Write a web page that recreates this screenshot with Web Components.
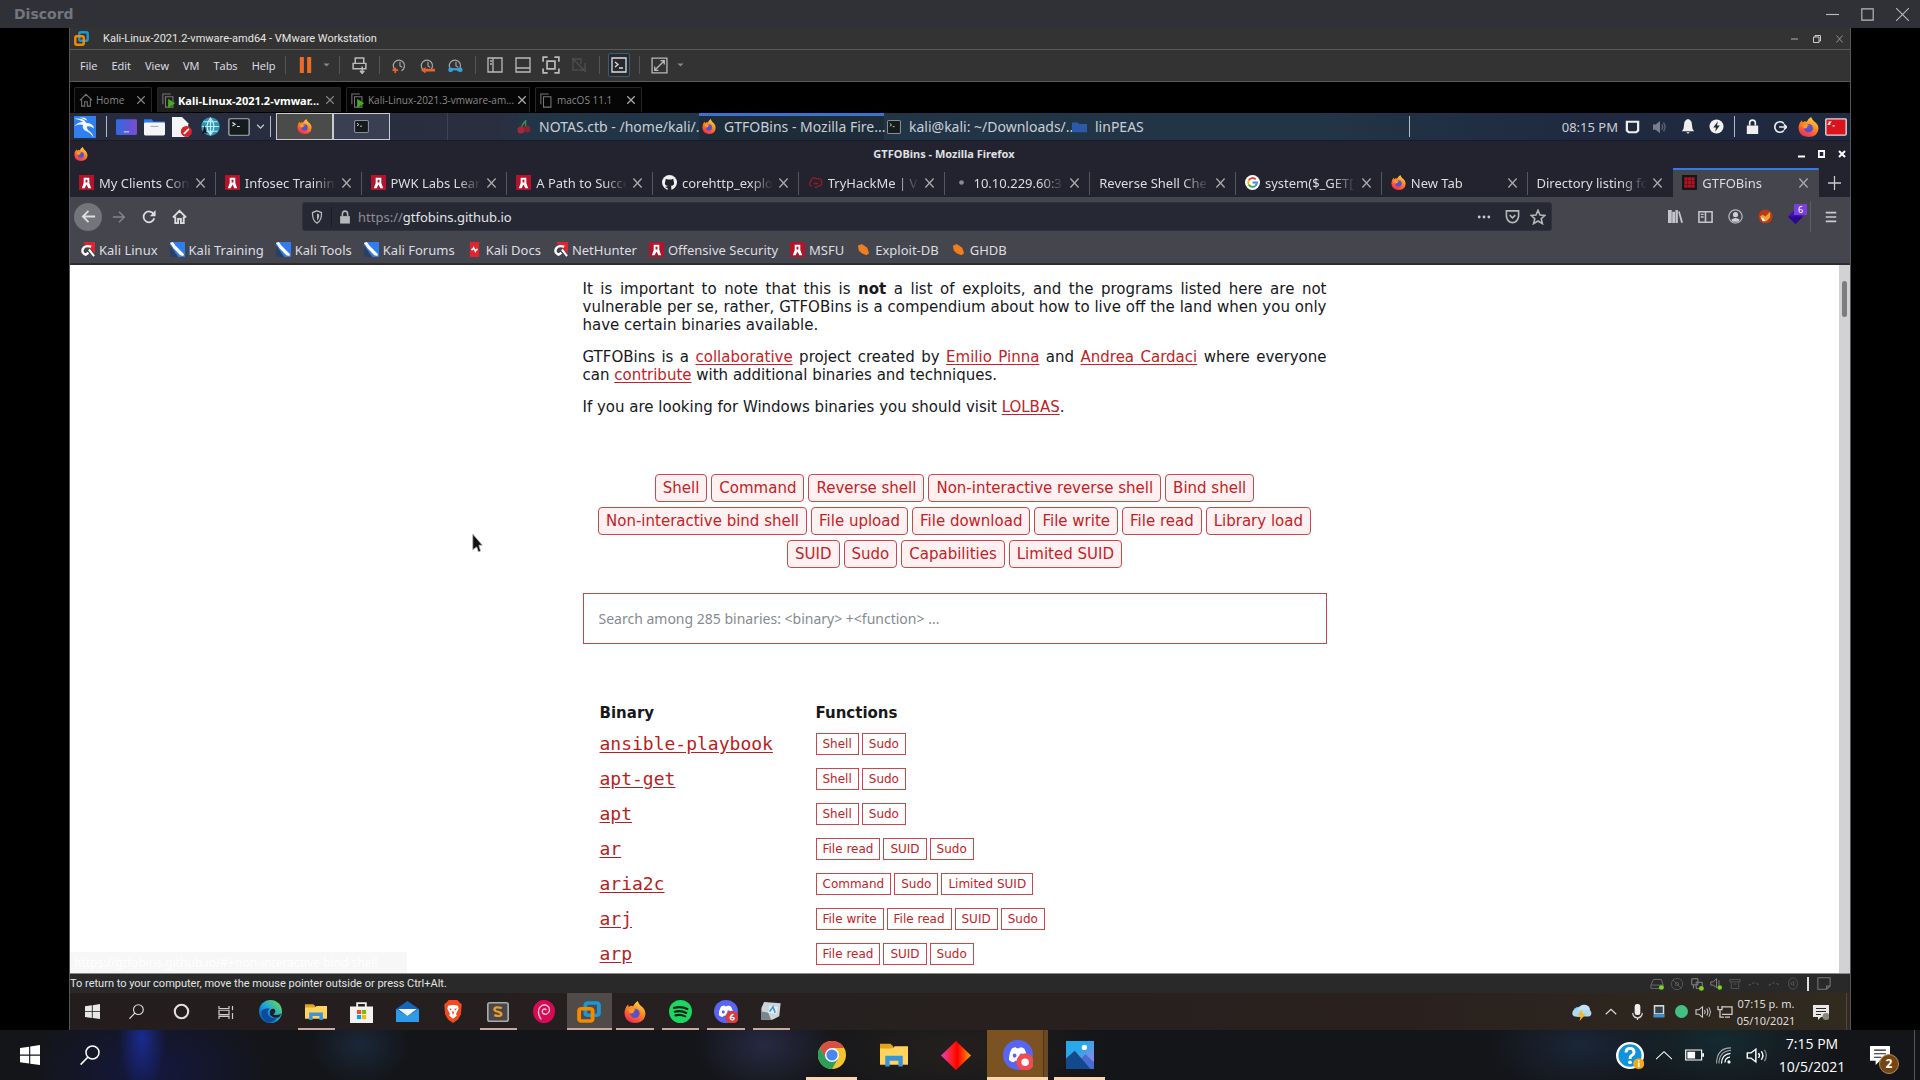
<!DOCTYPE html>
<html lang="en">
<head>
<meta charset="utf-8">
<title>Discord</title>
<style>
html, body { margin: 0; height: 100%; background: #000; overflow: hidden; }
body { font-family: "Noto Sans", "Open Sans", sans-serif; font-size: 13px; color: #ddd; }
</style>
</head>
<body>
<desk-top></desk-top>
<script>
const BASE = `
*, *::before, *::after { box-sizing: border-box; }
:host { box-sizing: border-box; }
button { font: inherit; color: inherit; background: none; border: 0; padding: 0; margin: 0; display: flex; align-items: center; justify-content: center; }
`;
function define(name, css, html, setup) {
  const t = document.createElement('template');
  t.innerHTML = `<style>${BASE}${css}</style>${html}`;
  customElements.define(name, class extends HTMLElement {
    constructor() {
      super();
      this.attachShadow({ mode: 'open' }).append(t.content.cloneNode(true));
    }
    connectedCallback() { if (setup) setup(this, this.shadowRoot); }
  });
}

/* ---------- icons ---------- */
const line = (d, c = '#bbb', w = 1.4, extra = '') => `<path d="${d}" fill="none" stroke="${c}" stroke-width="${w}" ${extra}/>`;
const CLOCK = c => line('M4 13.2A6 6 0 1 1 10 13.6', c, 1.3) + line('M8.5 4V8.5L11 10', c, 1.2);
const WIN = c => `<path fill="${c}" d="M0 2.3 7.3 1.3V7.6H0ZM8.2 1.2 16 0V7.6H8.2ZM0 8.5H7.3V14.8L0 13.8ZM8.2 8.5H16V16L8.2 14.9Z"/>`;
const SEARCH = c => `<circle cx="10" cy="6" r="5.2" fill="none" stroke="${c}" stroke-width="1.2"/>` + line('M6.2 9.8.5 15.7', c, 1.3);
const SPEAKER = (c, c2 = c) => line('M1 5.5H3.8L7.5 2V14L3.8 10.5H1Z', c, 1.1) + line('M9.5 5.8Q11 8 9.5 10.2', c, 1.1) + line('M11.7 4Q14 8 11.7 12', c, 1.1) + line('M14 2.5Q17 8 14 13.5', c2, 1);
const FOX = `<defs><linearGradient id="a" x1=".8" y1="0" x2=".3" y2="1"><stop offset="0" stop-color="#ffe14a"/><stop offset=".45" stop-color="#ff8a1f"/><stop offset="1" stop-color="#f02a55"/></linearGradient></defs>
<path fill="url(#a)" d="M10 0Q10.5 2 12.2 3.4 15.8 6 15.6 9.5 15 15.8 8 16 .8 15.6.4 9 .4 5 3 2.6L3.4 4.4 5 3.4 6.6 3.8Q7.4 1.6 10 0Z"/><circle cx="8" cy="9" r="3.4" fill="#5b50c8"/><path fill="#ff9a26" d="M3 6.3Q5.5 4.6 8.6 6.6 6.8 7 7 8.3 5.6 9.6 4.6 8.8 3.4 8 3 6.3Z"/>`;
const OFFSEC = `<rect width="16" height="16" fill="#b3142c"/><path d="M5 3H11V8.5L13 14H10L8 10 6 14H3L5 8.5ZM7 5V8H9V5Z" fill="#fff" fill-rule="evenodd"/>`;
const SPEAR = `<path d="M0 0H16V16H9L0 3Z" fill="#2f7df0"/><path d="M0 5V16H8Z" fill="#24416b"/><path d="M0 1 3 0 6 4 15 13 14 15 11 14 4 7Z" fill="#fff"/>`;
const NH = `<path d="M3 0H16V12Z" fill="#e3242f"/><path d="M12 5Q5 3 3 7.500 1.500 12 6 13.500L9 11.500" fill="none" stroke="#fff" stroke-width="2.600"/><path d="M9.500 8 15 15" stroke="#fff" stroke-width="2.200"/>`;
const VMW = `<rect x="5.6" y="1.4" width="9" height="9" rx="1.5" fill="none" stroke="#1998d5" stroke-width="2.6"/><rect x="1.4" y="5.6" width="9" height="9" rx="1.5" fill="none" stroke="#f38b00" stroke-width="2.6"/>`;
const FOLDER = `<path fill="#e2a21c" d="M0 1H6L7.5 2.6V6H0Z"/><path fill="#ffd35c" d="M0 4H7L8.5 2.6H16V14H0Z"/><path fill="#3a95d8" d="M3 8.5H13V15H10.5V11.5H5.5V15H3Z"/>`;
const DISCORD = `<circle cx="8" cy="8" r="8" fill="#5865f2"/><path fill="#fff" d="M4.7 4.5Q6 3.8 6.9 3.8L7.2 4.4H8.8L9.1 3.8Q10 3.8 11.3 4.5 13 7.3 12.8 10.6 11.5 11.7 10.2 11.9L9.6 11H6.4L5.8 11.9Q4.5 11.7 3.2 10.6 3 7.3 4.7 4.5Z"/><ellipse cx="6.2" cy="8.3" rx="1" ry="1.1" fill="#5865f2"/><ellipse cx="9.8" cy="8.3" rx="1" ry="1.1" fill="#5865f2"/>`;
const TERM = c => `<rect x=".6" y=".6" width="14.8" height="14.8" rx="1.5" fill="#151a1d" stroke="${c}" stroke-width="1.2"/>` + line('M3.2 4 5.2 5.6 3.2 7.2M6.5 7.6H8.6', '#ddd', 1);
const VMPAGE = c => line('M1 12V1H10M4 4H12.5V15H4Z', c, 1.2);
const ICONS = {
  min: line('M0 8H16', '#b9bbbe', 1.4), max: line('M1 1H15V15H1Z', '#b9bbbe', 1.4), close: line('M0 0 16 16M16 0 0 16', '#b9bbbe', 1.3),
  vmin: line('M0 8H16', '#888', 3), vmax: line('M1 4H12V15H1ZM4 4V1H15V12H12', '#ccc', 2), vclose: line('M1 1 15 15M15 1 1 15', '#999', 2),
  kmin: line('M0 13H16', '#fff', 4), kmax: line('M2 2H14V14H2Z', '#fff', 4), kclose: line('M2 2 14 14M14 2 2 14', '#fff', 4),
  vmware: VMW,
  pause: `<path fill="#f26a21" d="M1 0H6V16H1ZM10 0H15V16H10Z"/>`,
  caret: `<path fill="#888" d="M1 4H15L8 12Z"/>`,
  device: line('M4 6V1H12V6M2 6H14V11H2ZM10.5 9V15M8.5 13 10.5 15.4 12.5 13', '#bbb', 1.4),
  snap1: CLOCK('#aaa') + line('M3.5 10V16M.5 13H6.5', '#e8642a', 1.8),
  snap2: CLOCK('#aaa') + `<path fill="#e8642a" d="M1 13 6 9.5V11.5H16V14.5H6V16.5Z"/>`,
  snap3: CLOCK('#aaa') + line('M2 12H14', '#35a0dc', 2.4) + `<circle cx="2.8" cy="12.6" r="2.6" fill="#35a0dc"/><circle cx="13" cy="12.6" r="2.6" fill="#35a0dc"/>`,
  lay1: line('M1 1H15V15H1ZM6 1V15M3 4H5M3 7H5', '#bbb', 1.3), lay2: line('M1 1H15V15H1ZM1 11H15', '#bbb', 1.3),
  full: line('M1 5V1H5M11 1H15V5M15 11V15H11M5 15H1V11M4.5 4.5H11.5V11.5H4.5Z', '#bbb', 1.5),
  unity: line('M2 2H10V7M2 2V13H7M1 1 15 15M8 13H14V6', '#4d4f55', 1.3),
  vterm: line('M1 1H15V15H1Z', '#ddd', 1.3) + line('M4 5 7 7.5 4 10M8 11H12', '#ddd', 1.3),
  expand: line('M1 1H15V15H1ZM9 3.5H12.5V7M12.5 3.5 3.5 12.5M3.5 9V12.5H7', '#bbb', 1.2),
  home0: line('M1 8.5 8 1.5 15 8.5M3 7V15H6.5V10H9.5V15H13V7', '#777', 1.2),
  vmon: VMPAGE('#777') + `<path fill="#3fae1f" d="M7 6 15 11 7 16Z"/>`, vmoff: VMPAGE('#777'),
  x: line('M2 2 14 14M14 2 2 14', '#aaa', 2), xd: line('M2 2 14 14M14 2 2 14', '#888', 1.8),
  kali: `<rect width="16" height="16" fill="#2f7ff0"/><path d="M0 2Q7 1 9 5 14 5 14.5 9 12 7 9.5 7.6 9 9.6 12 11.6 14 13 14.4 16 12 12 8 10.6 5.6 9 6.6 6.6 3 5.6 0 7.6 3 4.4 6.6 4.4 4 2.4 0 2ZM4 1 8 1.2 10 3.4Z" fill="#f4f8ff"/>`,
  desk: `<defs><linearGradient id="a"><stop offset="0" stop-color="#2f6be0"/><stop offset="1" stop-color="#7c4ad0"/></linearGradient></defs><rect y="1" width="16" height="14" rx="1" fill="url(#a)"/><path d="M6 12.3H10" stroke="#c9d6ff"/>`,
  files: `<path fill="#2b7ae6" d="M0 1H6L7 3H16V6H0Z"/><rect y="4" width="16" height="11.5" rx="1" fill="#f2f4f7"/><path d="M5 7.5H11" stroke="#aab"/>`,
  doc: `<path fill="#f4f4f4" d="M0 0H8L13 5V16H0Z"/><circle cx="11.5" cy="11.5" r="4.4" fill="#d8232a"/><path d="M9.5 13.5 13.5 9.5" stroke="#fff" stroke-width="1.4"/>`,
  globe: `<circle cx="8" cy="8" r="7.8" fill="#2c95b8"/>` + line('M1 8H15M8 .5V15.5M8 1Q2 8 8 15M8 1Q14 8 8 15M2 4H14M2 12H14', '#c4ecf4', 1) + `<path d="M3 7 5 14 3 13 1 15Z" fill="#111"/>`,
  term: TERM('#8a8f94'), chev: line('M2 5 8 11 14 5', '#ccc', 2.2), fox: FOX,
  cherry: line('M5 10Q6 4 10 1Q9 6 11 9', '#3c8f4a', 1.6) + `<circle cx="4.5" cy="11.5" r="4" fill="#a32a3a"/><circle cx="11.5" cy="10.5" r="3.8" fill="#8e2234"/>`,
  bfolder: `<path fill="#2a5aa8" d="M0 2H6L7.5 4H16V15H0Z"/>`,
  screen: line('M2 2H14V12L12 14H4L2 12Z', '#eee', 2.4),
  kvol: `<path fill="#777e8c" d="M0 5H3L8 1V15L3 11H0Z"/>` + line('M10 5Q12 8 10 11M12 3Q15.5 8 12 13', '#5a6170', 1.6),
  bell: `<path fill="#eee" d="M8 0Q12.5 1 12.5 6 12.5 10.5 15 13H1Q3.5 10.5 3.5 6 3.5 1 8 0ZM6 14H10Q8 17 6 14Z"/>`,
  power: `<circle cx="8" cy="8" r="7.5" fill="#f2f2f2"/><path d="M9.5 2.5 4.5 9H7.5L6.5 13.5 11.5 7H8.5Z" fill="#1f2a40"/>`,
  lockw: `<path fill="#f0f0f0" d="M1 7H15V16H1Z"/>` + line('M4.5 7V4Q4.5 1.2 8 1.2T11.5 4V7', '#f0f0f0', 2),
  logout: line('M12.5 4A6 6 0 1 0 12.5 12M7 8H15M12.5 5 15.5 8 12.5 11', '#eee', 1.9),
  redterm: `<rect x=".6" y=".8" width="14.8" height="14.4" rx=".8" fill="#d9141b" stroke="#ddd" stroke-width="1"/>` + line('M2.5 3.5H4L2.5 5.5H4M5.5 7H7', '#fff', 1),
  offsec: OFFSEC, spear: SPEAR, nh: NH,
  docs: `<path fill="#e3242f" d="M3 0H13V16H3Z"/><path d="M4.500 8H6L7 6 9 10 10 8H11.500" stroke="#fff" stroke-width="1.500" fill="none"/>`,
  bug: `<path fill="#f07d1e" d="M2 4 6 2 9 4 12 6 14 12 11 14 6 12 3 9Z"/>`,
  github: `<circle cx="8" cy="8" r="8" fill="#f2f2f2"/><path fill="#20222a" d="M4 4 6 4.8H10L12 4 12.3 6Q14.3 11 9.8 11.5L10 16H6V13.7Q3.8 14 3.3 12.2 5 13 6.2 11.5 1.7 11 3.7 6Z"/>`,
  thm: line('M4 12Q0 10 3 6.5 5 1 9 4 15 3 14.5 8 15 12 10 12M6 9H11M7 13H10', '#8e1d26', 1.5),
  dot: `<circle cx="8" cy="8" r="2.5" fill="#8a8c94"/>`,
  google: `<circle cx="8" cy="8" r="8" fill="#fff"/>` + line('M11.5 4.7A4.7 4.7 0 0 0 4 5.7', '#ea4335', 2) + line('M4 5.6A4.7 4.7 0 0 0 4 10.4', '#fbbc05', 2) + line('M4 10.3A4.7 4.7 0 0 0 11 11.7', '#34a853', 2) + line('M11 11.7Q12.7 10.4 12.7 8H8', '#4285f4', 2),
  gtfo: `<rect width="16" height="16" fill="#14161a"/><rect x="2.5" y="2.5" width="11" height="11" fill="#b01624"/>` + line('M6 2V14M10 2V14M2 6H14M2 10H14', '#5a1018', .8),
  plus: line('M8 0V16M0 8H16', '#ccc', 1.5),
  back: line('M15 8H2M8 2 2 8 8 14', '#ddd', 2), fwd: line('M1 8H14M8 2 14 8 8 14', '#85868c', 1.7),
  reload: line('M13.5 5A6.2 6.2 0 1 0 14 9.5', '#ddd', 2) + `<path fill="#ddd" d="M15.5 0V7H9Z"/>`,
  homef: line('M1 9 8 2 15 9M3.5 8V15H6.5V10.5H9.5V15H12.5V8', '#ddd', 2),
  shield: line('M8 1 14 3Q14.5 12 8 15 1.5 12 2 3Z', '#b6b7bb', 1.7) + `<path fill="#b6b7bb" d="M8 4 11 5Q11 10 8 12Z"/>`,
  lock: `<path fill="#b6b7bb" d="M1.5 7H14.5V15.5H1.5Z"/>` + line('M4.5 7V4.5Q4.5 1.2 8 1.2T11.5 4.5V7', '#b6b7bb', 2),
  dots: `<circle cx="2.5" cy="8" r="1.6" fill="#ccc"/><circle cx="8" cy="8" r="1.6" fill="#ccc"/><circle cx="13.5" cy="8" r="1.6" fill="#ccc"/>`,
  pocket: line('M1.5 2H14.5V8Q13 14.5 8 14.5T1.5 8ZM5 6.5 8 9.5 11 6.5', '#b6b7bb', 1.7),
  star: line('M8 1.3 10 6 15 6.4 11.2 9.7 12.4 14.6 8 12 3.6 14.6 4.8 9.7 1 6.4 6 6Z', '#b6b7bb', 1.6),
  library: `<path fill="#c4c5ca" d="M0 1H4V15H0ZM4.500 3H7.500V15H4.500ZM8 1H10.500V15H8ZM10.800 3 12.500 2.500 16 14.500 14 15Z"/>`,
  sidebar: line('M1 2H15V14H1ZM8 2V14M3 5H6M3 8H6', '#c4c5ca', 1.7),
  account: line('M8 1A7 7 0 1 0 8.01 1', '#b6b7bb', 1.3) + `<circle cx="8" cy="6" r="2.7" fill="#d0d0d4"/><path fill="#d0d0d4" d="M3.5 11.5Q8 7.5 12.5 11.5L11 13.5H5Z"/>`,
  foxy: `<circle cx="8" cy="8" r="7.5" fill="#b83a16"/><path fill="#f0a03a" d="M2 8 5 6 8 8 13 3 13 9 9 13 5 12Z"/><path d="M3 9 6 10 8 13 5 13Z" fill="#fff"/>`,
  gem: `<path fill="#3d10b8" d="M8 0 16 8 8 16 0 8Z"/><path fill="#2a078c" d="M0 8H16L8 16Z"/>`,
  burger: line('M1 3H15M1 8H15M1 13H15', '#ccc', 1.9),
  s1: line('M1 10 4 3H13L15 10V14H1ZM1 10H15', '#777', 1) + `<circle cx="13" cy="13" r="2.8" fill="#7ed321"/>`,
  s2: `<circle cx="8" cy="8" r="6.5" fill="none" stroke="#5a5a5a" stroke-width="1"/><circle cx="8" cy="8" r="2" fill="none" stroke="#5a5a5a"/>` + line('M3 3 13 13', '#5a5a5a', 1),
  s3: line('M2 2H9V9H2ZM7 6H14V13H7ZM4 9V13', '#888', 1.1) + `<circle cx="13" cy="13" r="2.8" fill="#7ed321"/>`,
  s4: line('M1 6H4L8 2V13L4 10H1ZM11 4V10', '#888', 1.1) + `<circle cx="12" cy="13" r="2.8" fill="#7ed321"/>`,
  s5: line('M1 2H15V5H1ZM3 5V14H13V5M6 8H10', '#5a5a5a', 1.1), s6: line('M2 10Q8 3 14 10', '#5a5a5a', 1.3, 'stroke-dasharray="3 2"'),
  s7: `<ellipse cx="8" cy="8" rx="6" ry="7" fill="none" stroke="#5a5a5a"/>` + line('M5 7H7L9 5V11L7 9H5Z', '#5a5a5a', 1), s8: line('M1 1H15V11L11 15H1ZM15 11H11V15', '#777', 1.2),
  win: WIN('#e8e8e8'), winw: WIN('#fff'), search: SEARCH('#ddd'), searchw: SEARCH('#fff'),
  cortana: `<circle cx="8" cy="8" r="6.3" fill="none" stroke="#e0e0e0" stroke-width="2"/>`,
  taskview: line('M1 1V4H11V1M1 6H11V11H1ZM1 16V13H11V16M14.5 1V6M14.5 9V16', '#ccc', 1.2),
  edge: `<defs><linearGradient id="a" x1="0" y1="1" x2="1" y2="0"><stop offset=".1" stop-color="#0c55b5"/><stop offset=".5" stop-color="#1ba4e0"/><stop offset=".9" stop-color="#62d857"/></linearGradient></defs><circle cx="8" cy="8" r="8" fill="url(#a)"/><path d="M6 8Q6 13 12.5 12.7 10 16 6 15.5 1 13 1.8 7.5 4.5 5 7.5 6Z" fill="#0c4a9c"/><path d="M7.5 8Q8 5.5 10.5 6.3 12.5 8 10 10 12 11 15.5 9.5 14 13 11.5 12.3 7 12 7.5 8Z" fill="#231f1e"/>`,
  folder: FOLDER,
  store: line('M5 5V1.5H11V5', '#eee', 1.3) + `<path fill="#f2f2f2" d="M0 4H16V16H0Z"/><path fill="#f25022" d="M4.8 6.5H7.7V9.5H4.8Z"/><path fill="#7fba00" d="M8.3 6.5H11.2V9.5H8.3Z"/><path fill="#00a4ef" d="M4.8 10.2H7.7V13.2H4.8Z"/><path fill="#ffb900" d="M8.3 10.2H11.2V13.2H8.3Z"/>`,
  mail: `<path fill="#1565b8" d="M8 0 16 6V16H0V6Z"/><path fill="#2f9be8" d="M0 6 8 11.5 16 6V16H0Z"/><path fill="#f2f9ff" d="M1.5 6H14.5L8 11.5Z"/>`,
  brave: `<path fill="#f2491f" d="M4.5 0H11.5L13 1.5 15 3 14.3 10 12 13.5 8 16 4 13.5 1.7 10 1 3 3 1.5Z"/><path fill="#fff" d="M4 4 8 3.3 12 4 12.5 6 10.5 9.5 11 11 8 13 5 11 5.5 9.5 3.5 6Z"/><path fill="#f2491f" d="M5 5.5 7 6.5 6 7.3ZM11 5.5 9 6.5 10 7.3ZM7 8 8 10.5 9 8Z"/>`,
  sublime: `<rect x=".6" y=".6" width="14.8" height="14.8" rx="1.5" fill="#484848" stroke="#aaa" stroke-width="1.2"/>` + line('M10.8 4.8Q5.5 3.3 5.5 6 5.5 7.3 8 7.8 10.7 8.5 10.3 10.2 9.5 12 5.3 10.5', '#f09a2a', 1.8),
  debian: `<circle cx="8" cy="8" r="8" fill="#d70a53"/>` + line('M6 13.5Q2.5 9 5 5 8.5 1.5 11.5 5 13 8.5 9.5 10 6 10 7 7 8.5 5.5 9.8 7', '#f4c6d6', 1),
  spotify: `<circle cx="8" cy="8" r="8" fill="#1ed760"/>` + line('M3.5 5.5Q8.5 4 12.8 6.3M4 8.2Q8.3 7 12 9M4.5 10.7Q8 9.8 11.3 11.4', '#12221a', 1.5, 'stroke-linecap="round"'),
  discord: DISCORD,
  discord6: DISCORD + `<circle cx="12" cy="12" r="4.5" fill="#d83c3e"/>` + line('M13 9.8Q10.8 10.8 10.8 12.7 11 14 12.2 14 13.5 13.8 13.4 12.7 12.5 11.5 11 12.5', '#fff', .9),
  notes: `<path fill="#cfd4d8" d="M3 0 15 1 14 12 9 15 1 15 1 5Z"/><path fill="#78858e" d="M1 8 6 9 8 15H1Z"/><path d="M7 3 13 4 12 10 6 9Z" fill="#e4edf3"/>` + line('M7 8 9.500 4 11 9', '#3f9bd0', 1.200),
  discordrec: DISCORD + `<circle cx="11.8" cy="11.8" r="4.7" fill="#ed4c50"/><circle cx="11.8" cy="11.8" r="2" fill="#fff"/>`,
  weather: `<circle cx="6" cy="8" r="4.5" fill="#9fd2f3"/><circle cx="10" cy="6" r="4.5" fill="#c3e4f8"/><rect x="1" y="6" width="14.5" height="6" rx="3" fill="#aedaf5"/><path fill="#f6b81c" d="M8 6 5 11H7.5L6.5 16 11.5 9.5H9Z"/>`,
  up: line('M1 11 8 4.5 15 11', '#ddd', 1.5), upw: line('M0 12 8 4 16 12', '#fff', 1.1),
  mic: `<rect x="4.5" y="0" width="7" height="11" rx="2.5" fill="#eee"/>` + line('M2 9Q3 14 8 14T14 9M8 14V16', '#ddd', 1.5),
  sq: `<rect x="1" y="0" width="14" height="15" fill="#d6dade"/><rect x="3" y="2" width="10" height="8" fill="#34424e"/><rect x="1" y="11" width="14" height="4" fill="#3a8fd0"/>`,
  green: `<circle cx="8" cy="8" r="8" fill="#43bf86"/>`,
  vol: SPEAKER('#ccc'), volw: SPEAKER('#fff', '#888'),
  net: line('M5 3H15V11H5M8 14H13M1 2V6H5V2M3 6V14H7', '#ccc', 1.3),
  note: `<path fill="#e8e8e8" d="M0 1H16V13H8L5 16V13H0Z"/>` + line('M3 4.5H13M3 7.5H13M3 10.5H8', '#2c261f', 1.1) + `<circle cx="13" cy="12.5" r="3.5" fill="#8b8680"/>`,
  notew: `<path fill="#fff" d="M0 0H16V12.5H8L4.5 16V12.5H0Z"/>` + line('M3.3 3.5H12.7M3.3 6.5H12.7M3.3 9.5H9', '#1b1c20', .9),
  help: `<circle cx="8" cy="8" r="7.3" fill="#0f93dc" stroke="#fff" stroke-width="1.4"/>` + line('M5.7 6.2Q5.8 3.8 8 3.8T10.3 6Q10.3 7.2 8.9 8 8 8.5 8 10', '#fff', 1.7) + `<circle cx="8" cy="12" r="1.1" fill="#fff"/><circle cx="13" cy="12.8" r="3.2" fill="#f6a81c"/>` + line('M13 12.2V14.8M13 10.7V11.5', '#fff', .9),
  batt: line('M.6 3.6H14V12.4H.6Z', '#fff', 1) + `<path fill="#fff" d="M2 5H8.5V11H2ZM14.5 6.5H16V9.5H14.5Z"/>`,
  wifi: `<circle cx="13" cy="14" r="1.6" fill="#fff"/>` + line('M9 14.5Q9 10 14 9.5M5.5 15.5Q5.5 7 14.5 6', '#fff', 1.2) + line('M3 15.5Q3 4 15 3M.6 15.5Q.6 1 15 .8', '#aaa', 1),
  chrome: `<circle cx="8" cy="8" r="8" fill="#f7c42f"/><path fill="#d94f43" d="M1.07 4A8 8 0 0 1 14.93 4H8L4.5 10Z"/><path fill="#2aa05a" d="M1.07 4A8 8 0 0 0 8 16L11.5 10H4.6Z"/><circle cx="8" cy="8" r="4" fill="#fff"/><circle cx="8" cy="8" r="3.2" fill="#4a86ee"/>`,
  diamond: `<defs><linearGradient id="a"><stop offset="0" stop-color="#e83fb8"/><stop offset=".4" stop-color="#ff1a1a"/><stop offset=".55" stop-color="#f00"/><stop offset="1" stop-color="#ff9d0a"/></linearGradient></defs><path fill="url(#a)" d="M8 0 16 8 8 16 0 8Z"/>`,
  photos: `<defs><linearGradient id="a" x1="0" y1="0" x2="1" y2="1"><stop offset=".4" stop-color="#28a8ea"/><stop offset="1" stop-color="#b97be0"/></linearGradient></defs><rect width="16" height="16" fill="url(#a)"/><path fill="#4a6bd0" d="M6 13 11 7.5 16 12V16H6Z"/><path fill="#124a8c" d="M0 10 5 5.5 14 16H0Z"/><circle cx="10.5" cy="3.7" r="1.5" fill="#fff"/>`,
  cursor: `<path fill="#111" stroke="#bbb" stroke-width=".8" d="M2 0 13 10H9L11 15 8.5 16 6.5 11.5 2 14Z"/>`
};
customElements.define('ui-icon', class extends HTMLElement {
  constructor() { super(); this.attachShadow({ mode: 'open' }); }
  connectedCallback() {
    const w = this.getAttribute('w') || 16, h = this.getAttribute('h') || w;
    this.shadowRoot.innerHTML = `<style>:host{display:block;flex:none}svg{display:block}</style>
      <svg width="${w}" height="${h}" viewBox="0 0 16 16" preserveAspectRatio="none" aria-hidden="true">${ICONS[this.getAttribute('name')] || ''}</svg>`;
  }
});
const ic = (n, w, h) => `<ui-icon name="${n}" w="${w}" h="${h || w}"></ui-icon>`;
const ib = (n, w, h, label, cls = 'c') => `<button class="${cls}" aria-label="${label}">${ic(n, w, h)}</button>`;

/* ---------- outer frame ---------- */
define('desk-top', `
:host { display: flex; flex-direction: column; height: 100vh; }
main { flex: 1; min-height: 0; padding: 0 69px; display: flex; background: #000; }
vm-window { flex: 1; min-width: 0; }
`, `<app-bar></app-bar><main><vm-window></vm-window></main><host-taskbar></host-taskbar>`);

define('app-bar', `
:host { display: flex; align-items: center; justify-content: space-between; height: 28px; background: #303136; padding: 0 11px 0 14px; flex: none; }
h1 { margin: 0; font: bold 14px "DejaVu Sans", sans-serif; color: #72767d; }
nav { display: flex; gap: 22px; }
`, `<h1>Discord</h1><nav>${ib('min', 13, 13, 'Minimize')}${ib('max', 13, 13, 'Maximize')}${ib('close', 13, 13, 'Close')}</nav>`);

define('vm-window', `
:host { display: flex; flex-direction: column; border: solid #555; border-width: 0 1px; position: relative; }
guest-desktop { flex: 1; min-height: 0; }
.pointer { position: absolute; left: 401px; top: 506px; }
`, `<vm-header></vm-header><guest-desktop></guest-desktop><vm-status></vm-status><vm-taskbar></vm-taskbar><span class="pointer">${ic('cursor', 14, 18)}</span>`);

define('vm-header', `
:host { display: block; flex: none; color: #e6e6e6; font: 11px "Open Sans", sans-serif; }
.title { display: flex; align-items: center; height: 22px; background: #333; border-bottom: 1px solid #5a5a5a; padding: 0 7px 0 4px; gap: 14px; font: 11px Roboto, sans-serif; }
.title nav { margin-left: auto; display: flex; gap: 15px; }
.tools { display: flex; align-items: center; height: 32px; background: #333; border-bottom: 1px solid #5a5a5a; padding-bottom: 1px; }
.menu { display: flex; gap: 14px; width: 209px; padding-left: 10px; font-size: 11px; }
.menu button { color: #e0e0ee; }
.c { width: 28px; height: 24px; } .k { width: 14px; height: 24px; }
i { width: 12px; height: 18px; display: flex; justify-content: center; }
i::before { content: ""; width: 1px; background: #555; }
.on { width: 22px; height: 24px; margin: 0 3px; border: 1px solid #3c5a78; background: #26292e; border-radius: 2px; }
`, `<div class="title">${ic('vmware', 15, 15)}<span>Kali-Linux-2021.2-vmware-amd64 - VMware Workstation</span><nav>${ib('vmin', 7, 8, 'Minimize', '')}${ib('vmax', 8, 8, 'Restore', '')}${ib('vclose', 7, 8, 'Close', '')}</nav></div>
<div class="tools"><div class="menu"><button>File</button><button>Edit</button><button>View</button><button>VM</button><button>Tabs</button><button>Help</button></div>
<i></i>${ib('pause', 13, 16, 'Pause')}${ib('caret', 7, 6, 'Power menu', 'k')}<i></i>${ib('device', 17, 17, 'Send keys')}<i></i>
${ib('snap1', 15, 15, 'Take snapshot')}${ib('snap2', 15, 15, 'Revert')}${ib('snap3', 15, 15, 'Snapshot manager')}<i></i>
${ib('lay1', 16, 16, 'Library')}${ib('lay2', 16, 16, 'Thumbnails')}${ib('full', 18, 18, 'Full screen')}${ib('unity', 16, 16, 'Unity')}<i></i>
${ib('vterm', 16, 16, 'Console', 'on')}<i></i>${ib('expand', 17, 17, 'Stretch')}${ib('caret', 7, 6, 'Stretch menu', 'k')}</div>
<vm-tabs></vm-tabs>`);

define('vm-tabs', `
:host { display: flex; height: 31px; padding: 5px 4px 1px; gap: 5px; background: #000; font: 10px "Open Sans", sans-serif; color: #888; }
div { display: flex; align-items: center; gap: 3px; padding: 0 5px 0 4px; border: 1px solid #262626; border-bottom: 0; border-radius: 2px 2px 0 0; background: #060606; }
span { flex: 1; white-space: nowrap; }
.a { width: 78px; } .b { width: 184px; } .d { width: 107px; }
.on { background: #1f1f1f; color: #fff; font: bold 11px "Noto Sans", sans-serif; gap: 2px; }
`, `<div class="a">${ic('home0', 14, 14)}<span>Home</span>${ib('xd', 10, 10, 'Close tab')}</div>
<div class="b on">${ic('vmon', 14, 15)}<span>Kali-Linux-2021.2-vmwar...</span>${ib('xd', 10, 10, 'Close tab')}</div>
<div class="b">${ic('vmon', 14, 15)}<span>Kali-Linux-2021.3-vmware-am...</span>${ib('x', 10, 10, 'Close tab')}</div>
<div class="d">${ic('vmoff', 14, 15)}<span>macOS 11.1</span>${ib('x', 10, 10, 'Close tab')}</div>`);

/* ---------- guest ---------- */
define('guest-desktop', `
:host { display: flex; flex-direction: column; }
fox-page { flex: 1; min-height: 0; }
`, `<kali-panel></kali-panel><fox-chrome></fox-chrome><fox-page></fox-page>`);

define('kali-panel', `
:host { display: flex; align-items: center; height: 28px; flex: none; color: #c9cfd6; background: linear-gradient(90deg, #262b3e 0, #2a2f40 430px, #223547 460px, #223547 1240px, #1f2a40 1500px); border-bottom: 1px solid #181c28; }
.c { width: 28px; height: 28px; } .l { width: 30px; height: 28px; } .k { width: 12px; height: 28px; }
i { width: 12px; height: 21px; display: flex; justify-content: center; } i::before { content: ""; width: 1px; background: #b5b9c2; }
i.s { width: 8px; }
.w { width: 57px; height: 27px; border: 1px solid #c9c9cf; background: #3b3f54; } .w1 { background: #4b4b49; margin-left: 2px; }
.pad { width: 124px; height: 27px; display: flex; } .pad::before { content: ""; width: 58px; border-right: 1px solid #3d4353; }
.tasks { flex: 1; min-width: 0; height: 27px; display: flex; }
.t { width: 185px; height: 27px; justify-content: flex-start; gap: 8px; padding-left: 3px; font-size: 14px; white-space: nowrap; flex: none; }
.t.on { background: #1d2c38; border-top: 3px solid #3a72cf; padding-bottom: 3px; }
.r { width: 441px; display: flex; align-items: center; height: 21px; border-left: 1px solid #b5b9c2; justify-content: flex-end; }
time { font-size: 13px; }
`, `${ib('kali', 22, 22, 'Applications', 'l')}<i></i>${ib('desk', 21, 18, 'Desktop')}${ib('files', 21, 18, 'Files')}${ib('doc', 20, 20, 'Editor')}${ib('globe', 19, 19, 'Browser')}${ib('term', 22, 18, 'Terminal', 'l')}${ib('chev', 9, 9, 'More', 'k')}<i class="s"></i>
${ib('fox', 15, 15, 'Workspace 1', 'w w1')}${ib('term', 15, 13, 'Workspace 2', 'w')}<span class="pad"></span>
<div class="tasks"><button class="t">${ic('cherry', 14, 14)}<span>NOTAS.ctb - /home/kali/...</span></button><button class="t on">${ic('fox', 14, 15)}<span>GTFOBins - Mozilla Fire...</span></button><button class="t">${ic('term', 14, 14)}<span>kali@kali: ~/Downloads/...</span></button><button class="t">${ic('bfolder', 15, 12)}<span>linPEAS</span></button></div>
<div class="r"><time>08:15 PM</time>${ib('screen', 15, 14, 'Display')}${ib('kvol', 14, 14, 'Volume')}${ib('bell', 14, 15, 'Notifications')}${ib('power', 15, 15, 'Power')}<i class="s"></i>${ib('lockw', 13, 15, 'Lock')}${ib('logout', 14, 14, 'Log out')}${ib('fox', 21, 20, 'Firefox')}${ib('redterm', 22, 18, 'Root terminal')}</div>`);

const TABS = [['offsec', 'My Clients Con'], ['offsec', 'Infosec Training'], ['offsec', 'PWK Labs Lear'], ['offsec', 'A Path to Succe'], ['github', 'corehttp_explo'], ['thm', 'TryHackMe | V'], ['dot', '10.10.229.60:3'], ['', 'Reverse Shell Che'], ['google', 'system($_GET['], ['fox', 'New Tab'], ['', 'Directory listing for'], ['gtfo', 'GTFOBins']];
const MARKS = [['nh', 'Kali Linux'], ['spear', 'Kali Training'], ['spear', 'Kali Tools'], ['spear', 'Kali Forums'], ['docs', 'Kali Docs'], ['nh', 'NetHunter'], ['offsec', 'Offensive Security'], ['offsec', 'MSFU'], ['bug', 'Exploit-DB'], ['bug', 'GHDB']];

define('fox-tab', `
:host { display: flex; align-items: center; gap: 5px; padding: 0 9px; min-width: 0; position: relative; color: #dcdde0; border-right: 1px solid transparent; }
:host([sep]) { border-image: linear-gradient(#0000 15%, #55575f 15%, #55575f 90%, #0000 90%) 1; }
:host([on]) { background: #44454d; border-top: 2px solid #3a78dc; padding-bottom: 2px; }
span { flex: 1; min-width: 0; overflow: hidden; white-space: nowrap; mask-image: linear-gradient(90deg, #000 75%, transparent); }
`, `<slot name="icon"></slot><span><slot></slot></span>${ib('x', 11, 12, 'Close tab')}`);

define('fox-chrome', `
:host { display: block; flex: none; background: #22232e; }
.title { display: grid; grid-template-columns: 1fr auto 1fr; align-items: center; height: 27px; padding: 0 4px 2px; font: bold 11px "Noto Sans", sans-serif; color: #dfe0e4; }
.title span { margin-right: 32px; }
.title nav { display: flex; gap: 13px; justify-self: end; }
.tabs { display: grid; grid-template-columns: repeat(12, minmax(0, 1fr)) 31px; height: 29px; }
.bar { display: flex; align-items: center; height: 39px; background: #44454d; padding: 0 0 0 4px; }
.back { width: 28px; height: 28px; border-radius: 50%; background: #74757b; margin-right: 2px; }
.n { width: 26px; height: 28px; }
.c { width: 30px; height: 28px; }
.m { width: 26px; height: 28px; } .g { width: 28px; height: 28px; } .b { width: 39px; height: 28px; }
.url { display: flex; align-items: center; flex: 1; height: 29px; margin: 0 108px; background: #262834; border: 1px solid #30313b; border-radius: 3px; }
.url i { width: 1px; height: 20px; background: #1a1c26; }
.field { flex: 1; }
.field a { color: #e4e5e8; text-decoration: none; } .field span { color: #8d8f97; }
.gem { position: relative; } .gem b { position: absolute; left: 14px; top: 1px; width: 13px; height: 11px; background: #7a3fe0; color: #fff; font: 9px/11px "Noto Sans", sans-serif; text-align: center; }
.v { width: 1px; height: 31px; background: #5c5d65; }
.marks { display: flex; align-items: center; height: 29px; background: #44454d; padding: 0 10px; gap: 12px; border-bottom: 2px solid #2b2c34; }
.marks a { display: flex; align-items: center; gap: 4px; color: #dddee2; text-decoration: none; white-space: nowrap; }
`, `<div class="title">${ic('fox', 14, 14)}<span>GTFOBins - Mozilla Firefox</span><nav>${ib('kmin', 7, 8, 'Minimize', '')}${ib('kmax', 7, 8, 'Maximize', '')}${ib('kclose', 8, 8, 'Close', '')}</nav></div>
<div class="tabs">${TABS.map(([i, t], n) => `<fox-tab ${n === 11 ? 'on' : n < 10 ? 'sep' : ''}>${i ? `<ui-icon slot="icon" name="${i}" w="15" h="15"></ui-icon>` : ''}${t}</fox-tab>`).join('')}${ib('plus', 13, 14, 'New tab', '')}</div>
<div class="bar">${ib('back', 15, 15, 'Back', 'back')}${ib('fwd', 14, 14, 'Forward')}${ib('reload', 14, 14, 'Reload')}${ib('homef', 15, 15, 'Home')}
<div class="url">${ib('shield', 12, 14, 'Protection', 'g')}<i></i>${ib('lock', 12, 14, 'Site information', 'n')}<div class="field"><a href="#"><span>https://</span>gtfobins.github.io</a></div>${ib('dots', 14, 14, 'Page actions')}${ib('pocket', 15, 15, 'Pocket', 'm')}${ib('star', 16, 16, 'Bookmark', 'm')}</div>
${ib('library', 15, 15, 'Library')}${ib('sidebar', 15, 14, 'Sidebars')}${ib('account', 15, 15, 'Account')}${ib('foxy', 15, 15, 'Proxy')}<button class="c gem" aria-label="Extension">${ic('gem', 15, 15)}<b>6</b></button><i class="v"></i>${ib('burger', 12, 14, 'Menu', 'b')}</div>
<div class="marks">${MARKS.map(([i, t]) => `<a href="#">${ic(i, 15, 15)}<span>${t}</span></a>`).join('')}</div>`);

/* ---------- the web page ---------- */
define('fn-tag', `
:host { display: block; }
a { display: block; height: 28px; line-height: 26px; padding: 0 7px; border: 1px solid #c9484a; border-radius: 4px; background: #fff1f1; color: #c22226; text-decoration: none; white-space: nowrap; font-size: 15px; }
:host([small]) a { height: 22px; line-height: 20px; padding: 0 6px; border-radius: 0; background: #fff; font-size: 12px; }
`, `<a href="#"><slot></slot></a>`);

const FUNCS = ['Shell', 'Command', 'Reverse shell', 'Non-interactive reverse shell', 'Bind shell', 'Non-interactive bind shell', 'File upload', 'File download', 'File write', 'File read', 'Library load', 'SUID', 'Sudo', 'Capabilities', 'Limited SUID'];
const BINS = [['ansible-playbook', 'Shell', 'Sudo'], ['apt-get', 'Shell', 'Sudo'], ['apt', 'Shell', 'Sudo'], ['ar', 'File read', 'SUID', 'Sudo'], ['aria2c', 'Command', 'Sudo', 'Limited SUID'], ['arj', 'File write', 'File read', 'SUID', 'Sudo'], ['arp', 'File read', 'SUID', 'Sudo']];

define('bin-table', `
:host { display: block; }
table { border-collapse: collapse; font-size: 15px; line-height: 18px; }
th { text-align: left; padding: 0 0 4px; } td { padding: 0; height: 35px; }
th:first-child, td:first-child { width: 233px; padding-left: 17px; }
td > a { font: 18px/22px "DejaVu Sans Mono", monospace; color: #b81d22; text-underline-offset: 2px; }
div { display: flex; gap: 3px; }
`, `<table><thead><tr><th>Binary</th><th>Functions</th></tr></thead><tbody>${BINS.map(([b, ...f]) => `<tr><td><a href="#">${b}</a></td><td><div>${f.map(x => `<fn-tag small>${x}</fn-tag>`).join('')}</div></td></tr>`).join('')}</tbody></table>`);

define('fox-page', `
:host { display: flex; background: #fff; color: #16181c; font: 15px/18px "DejaVu Sans", sans-serif; position: relative; overflow: hidden; border-bottom: 1px solid #8a8a8a; }
article { flex: 1; min-width: 0; padding-top: 15px; }
.col { max-width: 744px; margin: 0 auto; }
p { margin: 0 0 14px; text-align: justify; }
p a { color: #c22226; text-underline-offset: 2px; }
.fns { display: flex; flex-wrap: wrap; justify-content: center; gap: 5px 4px; margin-top: 58px; }
input { display: block; width: 100%; height: 51px; margin: 25px 0 60px; padding: 0 15px; border: 1px solid #bf4a4c; background: #fff; font: 14px "Noto Sans", sans-serif; }
input::placeholder { color: #858b90; opacity: 1; }
.scroll { width: 11px; background: #d2d2d4; padding: 16px 3px; }
.scroll::before { content: ""; display: block; height: 36px; border-radius: 3px; background: #7d7d80; }
.hint { position: absolute; left: 0; bottom: 0; width: 337px; height: 21px; padding-left: 4px; background: #f7f7f7; color: #fff; font: 12px/21px "Noto Sans", sans-serif; white-space: nowrap; border-radius: 0 2px 0 0; }
`, `<article><div class="col">
<p>It is important to note that this is <b>not</b> a list of exploits, and the programs listed here are not vulnerable per se, rather, GTFOBins is a compendium about how to live off the land when you only have certain binaries available.</p>
<p>GTFOBins is a <a href="#">collaborative</a> project created by <a href="#">Emilio Pinna</a> and <a href="#">Andrea Cardaci</a> where everyone can <a href="#">contribute</a> with additional binaries and techniques.</p>
<p>If you are looking for Windows binaries you should visit <a href="#">LOLBAS</a>.</p>
<div class="fns">${FUNCS.map(f => `<fn-tag>${f}</fn-tag>`).join('')}</div>
<input type="text" aria-label="Search" placeholder="Search among 285 binaries: &lt;binary&gt; +&lt;function&gt; ...">
<bin-table></bin-table></div></article><div class="scroll"></div>
<div class="hint">https://gtfobins.github.io/#+non-interactive bind shell</div>`);

/* ---------- bottom bars ---------- */
define('vm-status', `
:host { display: flex; align-items: center; height: 19px; flex: none; background: #292929; color: #e4e4e4; font: 11px Roboto, sans-serif; padding-right: 19px; }
nav { margin-left: auto; display: flex; align-items: center; gap: 6px; }
i { width: 2px; height: 14px; background: #ddd; margin: 0 2px; }
`, `<span>To return to your computer, move the mouse pointer outside or press Ctrl+Alt.</span><nav>${ib('s1', 14, 13, 'Hard disk')}${ib('s2', 14, 14, 'CD')}${ib('s3', 14, 14, 'Network')}${ib('s4', 13, 13, 'Sound')}${ib('s5', 12, 12, 'Printer')}${ib('s6', 14, 12, 'USB 1')}${ib('s6', 14, 12, 'USB 2')}${ib('s7', 12, 13, 'Audio')}<i></i>${ib('s8', 14, 13, 'Message log')}</nav>`);

const APPS = [['edge', 23, 23, 0], ['folder', 22, 18, 1], ['store', 23, 22, 0], ['mail', 23, 21, 0], ['brave', 20, 23, 0], ['sublime', 22, 20, 1], ['debian', 22, 23, 0], ['vmware', 24, 22, 2], ['fox', 22, 22, 1], ['spotify', 23, 23, 1], ['discord6', 24, 23, 1], ['notes', 22, 19, 1]];
define('vm-taskbar', `
:host { display: flex; height: 37px; flex: none; background: linear-gradient(90deg, #231d1d, #262020 40%, #2a211e 75%, #302a1f); color: #ddd; padding-right: 3px; }
.sys { display: grid; grid-template-columns: repeat(4, 1fr); width: 178px; }
.apps { display: grid; grid-template-columns: repeat(12, 1fr); width: 546px; }
.apps button { border-top: 2px solid transparent; position: relative; padding-bottom: 2px; }
.run::after { content: ""; position: absolute; left: 4px; right: 4px; bottom: 0; height: 2px; background: #c9a99d; }
.cur { background: #504a49; } .cur::after { left: 0; right: 0; }
.tray { margin-left: auto; display: flex; align-items: center; border-right: 1px solid #514a3c; }
.c { width: 22px; height: 36px; } .w { width: 30px; height: 36px; } .e { width: 50px; height: 36px; }
time { display: block; width: 60px; font: 11px/17px "Noto Sans", sans-serif; text-align: center; white-space: nowrap; }
`, `<div class="sys">${ib('win', 15, 15, 'Start', '')}${ib('search', 15, 15, 'Search', '')}${ib('cortana', 17, 17, 'Cortana', '')}${ib('taskview', 16, 14, 'Task view', '')}</div>
<div class="apps">${APPS.map(([n, w, h, r]) => ib(n, w, h, n, r === 2 ? 'run cur' : r ? 'run' : '')).join('')}</div>
<div class="tray">${ib('weather', 21, 18, 'Weather', 'w')}${ib('up', 12, 12, 'Hidden icons', 'w')}${ib('mic', 13, 16, 'Microphone')}${ib('sq', 12, 13, 'Device')}${ib('green', 13, 13, 'Status')}${ib('vol', 16, 14, 'Volume')}${ib('net', 16, 15, 'Network')}<time>07:15 p. m.<br>05/10/2021</time>${ib('note', 16, 16, 'Notifications', 'e')}</div>`);

define('host-taskbar', `
:host { display: grid; grid-template-columns: 1fr auto 1fr; height: 50px; flex: none; color: #fff;
 background: radial-gradient(ellipse 24px 55px at 142px 8px, #1a2a90, transparent), radial-gradient(ellipse 120px 70px at 150px 40px, #14183f, transparent), radial-gradient(ellipse 50px 40px at 360px 15px, #1a2838, transparent), radial-gradient(ellipse 70px 50px at 765px 15px, #272a42, transparent), radial-gradient(ellipse 160px 60px at 950px 20px, #24201e, transparent), radial-gradient(ellipse 90px 50px at 1580px 15px, #1a2638, transparent), radial-gradient(ellipse 120px 60px at 1720px 10px, #152a31, transparent), #141519; }
.l { display: flex; padding-left: 5px; } .l button { width: 50px; } .l button + button { margin-left: 10px; }
.m { display: flex; margin-right: 9px; gap: 11px; }
.m button { width: 51px; position: relative; }
.run::after { content: ""; position: absolute; left: 0; right: 0; bottom: 0; height: 3px; background: #fcd6ae; }
.m .cur { width: 61px; margin: 0 -5px; background: linear-gradient(90deg, #7b5323 0 56px, #513719 56px 57px, #6a4a25 57px); }
.r { display: flex; justify-content: flex-end; align-items: center; padding-right: 5px; }
.r .c { width: 30px; height: 50px; } .h { width: 38px; height: 50px; } .v { width: 34px; height: 50px; }
time { display: block; font: 14px/23px "Open Sans", sans-serif; text-align: center; width: 78px; }
.n { width: 64px; height: 50px; position: relative; border-right: 1px solid #555; padding-right: 6px; }
.n b { position: absolute; left: 28px; top: 24px; width: 20px; height: 20px; border-radius: 50%; background: #77450f; border: 1px solid #b08a60; font: bold 12px/18px "Open Sans", sans-serif; text-align: center; }
`, `<div class="l">${ib('winw', 20, 20, 'Start', '')}${ib('searchw', 20, 20, 'Search', '')}</div>
<div class="m">${ib('chrome', 28, 28, 'Chrome', 'run')}${ib('folder', 28, 26, 'Explorer', '')}${ib('diamond', 30, 29, 'Editor', '')}${ib('discordrec', 30, 30, 'Discord', 'run cur')}${ib('photos', 28, 28, 'Photos', 'run')}</div>
<div class="r">${ib('help', 28, 27, 'Help', 'h')}${ib('upw', 16, 15, 'Hidden icons')}${ib('batt', 19, 18, 'Battery')}${ib('wifi', 16, 17, 'Wi-Fi')}${ib('volw', 21, 17, 'Volume', 'v')}<time>7:15 PM<br>10/5/2021</time><button class="n" aria-label="Notifications">${ic('notew', 20, 19)}<b>2</b></button></div>`);
</script>
</body>
</html>
